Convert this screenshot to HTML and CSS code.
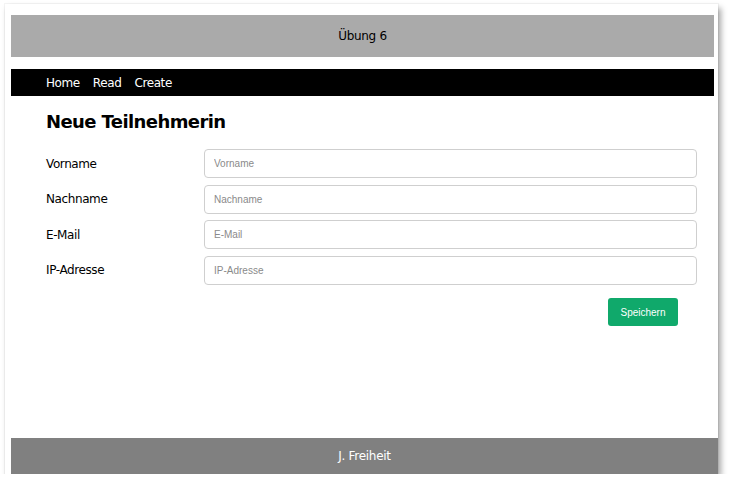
FILE: index.html
```html
<!DOCTYPE html>
<html lang="de">
<head>
<meta charset="utf-8">
<title>Übung 6</title>
<link rel="stylesheet" href="styles.css">
</head>
<body>
<div class="window">
  <header class="top">Übung 6</header>
  <nav class="nav">
    <a href="#" class="nav-link">Home</a>
    <a href="#" class="nav-link">Read</a>
    <a href="#" class="nav-link">Create</a>
  </nav>
  <main class="main">
    <h1 class="title">Neue Teilnehmerin</h1>
    <form class="form">
      <label class="label" for="vn">Vorname</label>
      <input class="input" id="vn" placeholder="Vorname">
      <label class="label" for="nn">Nachname</label>
      <input class="input" id="nn" placeholder="Nachname">
      <label class="label" for="em">E-Mail</label>
      <input class="input" id="em" placeholder="E-Mail">
      <label class="label" for="ip">IP-Adresse</label>
      <input class="input" id="ip" placeholder="IP-Adresse">
      <div class="actions">
        <button type="button" class="btn">Speichern</button>
      </div>
    </form>
  </main>
  <footer class="foot">J. Freiheit</footer>
</div>
</body>
</html>
```
FILE: styles.css
```css
html, body {
  margin: 0;
  background: #ffffff;
}
body {
  font-family: "DejaVu Sans", Verdana, sans-serif;
}
.window {
  box-sizing: border-box;
  margin: 4px 0 0 5px;
  width: 713px;
  height: 470px;
  padding: 11px 0 0 6px;
  display: flex;
  flex-direction: column;
  background: #fff;
  box-shadow: 0 0 0 1px rgba(0,0,0,0.04), 3px 4px 6px rgba(0,0,0,0.35);
}
.top {
  margin-right: 4px;
  height: 42px;
  background: #aaaaaa;
  display: flex;
  align-items: center;
  justify-content: center;
  font-size: 12px;
  letter-spacing: -0.3px;
  color: #000;
}
.nav {
  margin-top: 12px;
  margin-right: 4px;
  height: 27px;
  background: #000;
  display: flex;
  align-items: center;
  gap: 13px;
  padding-left: 35px;
}
.nav-link {
  color: #fff;
  text-decoration: none;
  font-size: 12px;
  letter-spacing: -0.4px;
}
.main {
  flex: 1;
  padding: 14.5px 21px 0 35px;
}
.title {
  margin: 0;
  font-size: 18px;
  line-height: 21px;
  font-weight: bold;
  letter-spacing: -0.6px;
}
.form {
  margin-top: 17.7px;
  display: grid;
  grid-template-columns: 158px 1fr;
  row-gap: 6.5px;
  align-items: center;
}
.label {
  font-size: 12px;
  letter-spacing: -0.4px;
  color: #000;
}
.input {
  box-sizing: border-box;
  height: 29px;
  width: 100%;
  margin: 0;
  border: 1px solid #cfcfcf;
  border-radius: 4px;
  padding: 0 9px;
  font-family: "Liberation Sans", Arial, sans-serif;
  font-size: 10px;
  color: #333;
  background: #fff;
}
.input::placeholder {
  color: #8a8a8a;
}
.actions {
  grid-column: 1 / 3;
  display: flex;
  justify-content: flex-end;
  padding-right: 19px;
  margin-top: 7px;
}
.btn {
  width: 70px;
  height: 28px;
  border: none;
  border-radius: 3px;
  background: #10a96b;
  color: #fff;
  font-family: "Liberation Sans", Arial, sans-serif;
  font-size: 10px;
  padding: 0;
}
.foot {
  height: 36px;
  background: #808080;
  color: #fff;
  display: flex;
  align-items: center;
  justify-content: center;
  font-size: 12px;
  letter-spacing: -0.3px;
}
```
